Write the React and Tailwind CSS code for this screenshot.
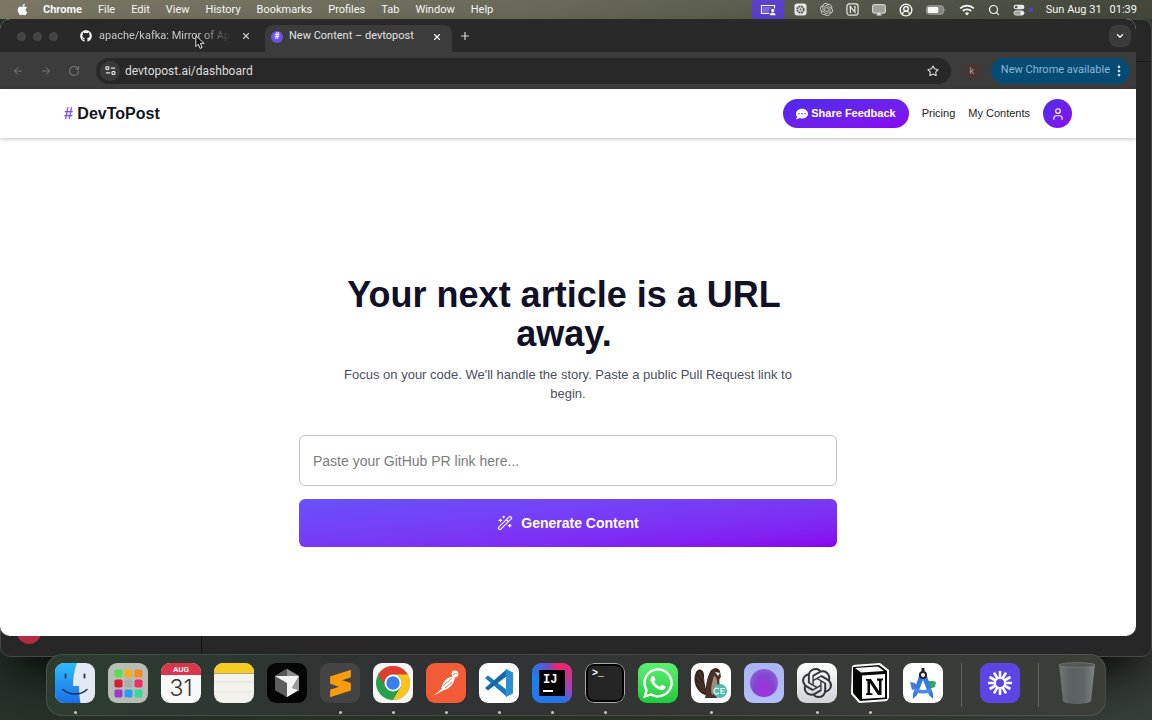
import {
  ArrowLeft,
  ArrowRight,
  ChevronDown,
  CircleUserRound,
  EllipsisVertical,
  Plus,
  RotateCw,
  Search,
  Star,
  User,
  WandSparkles,
  X,
} from "lucide-react";
import { FaApple, FaCommentDots, FaGithub, FaWhatsapp } from "react-icons/fa";
import { SiOpenai, SiSublimetext } from "react-icons/si";

const menus = ["File", "Edit", "View", "History", "Bookmarks", "Profiles", "Tab", "Window", "Help"];

function ScreenShareIcon() {
  return (
    <svg viewBox="0 0 16 12" className="h-3 w-4" fill="none" stroke="white">
      <path d="M9.5 9.5H1.5V1.5h13v3" strokeWidth="1.2" />
      <path d="M3 4h8M3 6h6M3 8h6" strokeWidth=".8" opacity=".6" />
      <circle cx="12.7" cy="6.4" r="1.6" fill="white" stroke="none" />
      <path d="M9.8 11.2c0-3.6 5.8-3.6 5.8 0z" fill="white" stroke="none" />
    </svg>
  );
}

function LoomMenuIcon() {
  return (
    <svg viewBox="0 0 14 14" className="size-[13px]">
      <rect x=".5" y=".5" width="13" height="13" rx="3" fill="#eee" />
      <circle cx="7" cy="7" r="3.4" fill="none" stroke="#55574c" strokeWidth="2" strokeDasharray="2 .7" />
      <circle cx="7" cy="7" r="1" fill="#55574c" />
    </svg>
  );
}

function NotionMenuIcon() {
  return (
    <svg viewBox="0 0 14 14" className="size-[13px]" fill="none" stroke="#f1f1ee">
      <rect x="1" y="1" width="12" height="12" rx="2.5" strokeWidth="1.3" />
      <path d="M3.6 4h2M8.6 4h2M3.8 10.2h1.8" strokeWidth=".9" />
      <path d="M4.7 10V4l4.9 6V4" strokeWidth="1.3" />
    </svg>
  );
}

function DisplayIcon() {
  return (
    <svg viewBox="0 0 14 12" className="h-3 w-3.5">
      <rect x=".7" y=".7" width="12.6" height="8.4" rx="1" fill="#a4a59d" stroke="#eee" />
      <path d="M5.5 9h3v1.6h1.2v.9H4.3v-.9h1.2z" fill="#eee" />
    </svg>
  );
}

function BatteryIcon() {
  return (
    <svg viewBox="0 0 20 10" className="h-2.5 w-5">
      <rect x=".5" y=".8" width="17" height="8.4" rx="2.4" fill="#8a8b82" stroke="#a5a69d" />
      <rect x="1.8" y="2" width="10.5" height="6" rx="1.2" fill="#fff" />
      <path d="M18.6 3.4c1.2.4 1.2 2.8 0 3.2z" fill="#a5a69d" />
    </svg>
  );
}

function WifiIcon() {
  return (
    <svg viewBox="0 0 16 12" className="h-3 w-4" fill="none" stroke="#fff" strokeWidth="1.8">
      <path d="M1.2 4.4a9.6 9.6 0 0 1 13.6 0" />
      <path d="M3.8 7a6 6 0 0 1 8.4 0" />
      <path d="M8 11.4 5.9 9.2a3 3 0 0 1 4.2 0z" fill="#fff" stroke="none" />
    </svg>
  );
}

function ControlCenterIcon() {
  return (
    <svg viewBox="0 0 12 12" className="size-3">
      <rect x=".6" y=".8" width="10.8" height="4.4" rx="2.2" fill="#eee" />
      <circle cx="3.2" cy="3" r="1.3" fill="#4d5045" />
      <rect x="1" y="7" width="10" height="4" rx="2" fill="#a4a59d" stroke="#eee" />
      <circle cx="9" cy="9" r="1.7" fill="#fff" />
    </svg>
  );
}

function MenuBar() {
  return (
    <header className="flex h-[19px] shrink-0 items-center justify-between bg-linear-to-r from-[#7d7866] via-[#6c6d5c] via-45% to-[#44483d] pr-[15px] pl-4 text-[11px] leading-4 text-white">
      <nav className="flex items-center gap-4">
        <button aria-label="Apple menu" className="mr-[-5px] w-4"><FaApple className="size-[13px]" /></button>
        <button className="font-bold">Chrome</button>
        {menus.map((name) => (
          <button key={name}>{name}</button>
        ))}
      </nav>
      <div className="flex items-center gap-[13px]">
        <div className="flex items-center gap-2.5">
          <button aria-label="Screen sharing" className="flex h-[19px] w-8 items-center justify-center bg-[#5b42cf]"><ScreenShareIcon /></button>
          <LoomMenuIcon />
        </div>
        <SiOpenai className="size-[13px] text-[#d7d8d0]" />
        <NotionMenuIcon />
        <DisplayIcon />
        <CircleUserRound className="size-3.5" strokeWidth={2.4} />
        <BatteryIcon />
        <WifiIcon />
        <Search className="size-3" strokeWidth={2.4} />
        <span className="flex items-center gap-1">
          <ControlCenterIcon />
          <span className="size-1 rounded-full bg-[#5e41e0]" />
        </span>
        <time className="flex gap-2"><span>Sun Aug 31</span><span>01:39</span></time>
      </div>
    </header>
  );
}

function TabStrip() {
  return (
    <div className="flex h-[33px] items-end bg-[#292929] pr-[5px]">
      <div className="flex h-8 w-[72px] shrink-0 items-center gap-[7px] pl-[17px]">
        <span className="size-[9px] rounded-full bg-[#444]" />
        <span className="size-[9px] rounded-full bg-[#444]" />
        <span className="size-[9px] rounded-full bg-[#444]" />
      </div>
      <div className="flex h-8 w-[193px] items-center gap-[7px] pr-3 pl-2">
        <FaGithub className="size-3 shrink-0 text-white" />
        <button className="min-w-0 flex-1 text-left text-[11px] whitespace-nowrap text-[#c8c8c8] mask-r-from-75%">apache/kafka: Mirror of Apac</button>
        <button aria-label="Close tab" className="shrink-0 p-0.5 text-[#d0d0d0]"><X className="size-2.5" strokeWidth={2.6} /></button>
      </div>
      <div className="flex h-[27px] w-[187px] items-center gap-1.5 rounded-t-lg bg-[#3c3c3c] pr-2 pb-1 pl-1.5">
        <span className="flex size-3 shrink-0 items-center justify-center rounded-full bg-[#6e50ed] text-[9px] font-bold text-white">#</span>
        <button className="flex-1 text-left text-[11px] whitespace-nowrap text-[#e3e3e3]">New Content – devtopost</button>
        <button aria-label="Close tab" className="p-0.5 text-white"><X className="size-2.5" strokeWidth={2.8} /></button>
      </div>
      <button aria-label="New tab" className="flex h-8 w-[26px] items-center justify-center text-[#d6d6d6]"><Plus className="size-3" strokeWidth={2.4} /></button>
      <button aria-label="Search tabs" className="mb-[5px] ml-auto flex size-[22px] items-center justify-center rounded-lg bg-[#3b3b3b] text-white"><ChevronDown className="size-2.5" strokeWidth={3} /></button>
    </div>
  );
}

function Toolbar() {
  return (
    <div className="flex h-[37px] items-center bg-[#3c3c3c] pr-[6px] pl-3 text-[#777]">
      <button aria-label="Back" className="mr-4"><ArrowLeft className="size-3" /></button>
      <button aria-label="Forward" className="mr-4"><ArrowRight className="size-3" /></button>
      <button aria-label="Reload" className="mr-4"><RotateCw className="size-3" strokeWidth={2.4} /></button>
      <div className="flex h-[26px] flex-1 items-center rounded-full bg-[#282828] pr-3 pl-1">
        <button aria-label="Site information" className="flex size-5 items-center justify-center rounded-full bg-[#3a3a3a]">
          <svg viewBox="0 0 12 12" className="size-[11px]" fill="none" stroke="#e0e0e0" strokeWidth="1.4">
            <circle cx="2.6" cy="3.4" r="1.7" />
            <path d="M6.4 3.4H11M1 8.6h4.6" />
            <circle cx="9.2" cy="8.6" r="1.7" />
          </svg>
        </button>
        <input aria-label="Address" defaultValue="devtopost.ai/dashboard" className="ml-[5px] min-w-0 flex-1 bg-transparent text-xs text-[#dedede] outline-none" />
        <button aria-label="Bookmark" className="text-[#e0e0e0]"><Star className="size-3" strokeWidth={2.2} /></button>
      </div>
      <button className="mr-3 ml-[14px] size-3.5 rounded-sm bg-[#4a3535] text-[9px] leading-3.5 text-[#aaa]">k</button>
      <button className="flex h-[26px] items-center gap-0.5 rounded-full bg-[#064b74] pr-1 pl-2.5 text-[11px] text-[#8fb6d6]">
        New Chrome available
        <EllipsisVertical className="size-3.5 text-[#c8e0f0]" strokeWidth={2.6} />
      </button>
    </div>
  );
}

function SiteHeader() {
  return (
    <header className="flex h-[49px] items-center justify-between px-16 text-[11px] text-[#222] shadow-[0_1px_4px_rgba(0,0,0,0.25)]">
      <a href="#" className="text-base font-bold text-[#15151c]"><span className="text-[#7552f2]">#</span> DevToPost</a>
      <nav className="flex items-center gap-[13px]">
        <button className="flex h-[29px] items-center gap-[3px] rounded-full bg-linear-to-br from-[#4a2be8] to-[#8a00f0] px-[13px] font-bold text-white">
          <FaCommentDots className="size-3" />
          Share Feedback
        </button>
        <a href="#pricing">Pricing</a>
        <a href="#contents">My Contents</a>
        <button aria-label="Account" className="flex size-[29px] items-center justify-center rounded-full bg-linear-to-br from-[#4a2be8] to-[#8a00f0] text-white"><User className="size-3.5" strokeWidth={2} /></button>
      </nav>
    </header>
  );
}

function Dashboard() {
  return (
    <main className="mx-auto flex w-full max-w-[538px] flex-col pt-[137px]">
      <h1 className="pr-2 text-center text-4xl leading-[39px] font-bold text-[#101127]">
        Your next article is a URL
        <br />
        away.
      </h1>
      <p className="mx-auto mt-3 max-w-[461px] text-center text-[13px] leading-[19px] text-[#4b4f5c]">
        Focus on your code. We'll handle the story. Paste a public Pull Request link to begin.
      </p>
      <form className="mt-8 flex flex-col gap-[13px]" onSubmit={(e) => e.preventDefault()}>
        <input aria-label="GitHub PR link" placeholder="Paste your GitHub PR link here..." className="h-[51px] rounded-md border border-[#c4c4c4] px-[13px] text-sm placeholder:text-[#7c7c7c]" />
        <button className="flex h-12 items-center justify-center gap-2 rounded-md bg-linear-to-br from-[#6652fb] to-[#8700ef] text-sm font-bold text-white">
          <WandSparkles className="size-4" strokeWidth={1.8} />
          Generate Content
        </button>
      </form>
    </main>
  );
}

function Finder() {
  return (
    <svg viewBox="0 0 40 40">
      <defs>
        <linearGradient id="finder" x2="0" y2="1"><stop stopColor="#2dbcf8" /><stop offset="1" stopColor="#1b6eea" /></linearGradient>
      </defs>
      <rect width="40" height="40" fill="#e5e9f3" />
      <path d="M0 0h22c-3 7-4 15-4 23h6c0 7 .5 12 1.5 17H0z" fill="url(#finder)" />
      <path d="M10.5 11.5v3M29.5 11.5v3" stroke="#183450" strokeWidth="1.8" strokeLinecap="round" />
      <path d="M8 26.5c6 6 18 6 24 0" fill="none" stroke="#183450" strokeWidth="1.5" strokeLinecap="round" />
    </svg>
  );
}

const launchpadColors = ["#5bdd50", "#f5ab25", "#f58b1e", "#d61f33", "#a9adad", "#ee2c69", "#9a3cc9", "#2a9df0", "#36d99b"];

function Launchpad() {
  return (
    <svg viewBox="0 0 40 40">
      <rect width="40" height="40" fill="#b8bdb5" />
      {launchpadColors.map((color, i) => (
        <rect key={color} x={6.5 + (i % 3) * 10} y={6.5 + Math.floor(i / 3) * 10} width="8" height="8" rx="1.8" fill={color} />
      ))}
    </svg>
  );
}

function Calendar() {
  return (
    <span className="flex size-full flex-col items-center bg-[#f8f8f8]">
      <span className="h-3 w-full bg-[#d8364c] text-center text-[8px] leading-[13px] font-semibold text-white">AUG</span>
      <span className="font-[Inter,sans-serif] text-[23px] leading-[26px] font-light text-[#333]">31</span>
    </span>
  );
}

function Notes() {
  return (
    <svg viewBox="0 0 40 40">
      <rect width="40" height="40" fill="#f3f2ed" />
      <path d="M0 0h40v10H0z" fill="#f5cc25" />
      <path d="M0 10.5h40" stroke="#b6a86c" />
      <path d="M0 19h40M0 29h40" stroke="#e4e3dd" />
    </svg>
  );
}

function Cursor() {
  return (
    <svg viewBox="0 0 40 40">
      <rect width="40" height="40" fill="#050505" />
      <path d="M20 6 32 13v14l-12 7-12-7V13z" fill="#777" />
      <path d="M20 6 32 13H8z" fill="#8d8d8d" />
      <path d="M20 6v7H8z" fill="#555" />
      <path d="M8 13l12 7v14L8 27z" fill="#5d5d5d" />
      <path d="M8 13h24l-7 12 7 2-12 7V20z" fill="#f3f3f3" />
      <path d="M32 13v14l-7-2z" fill="#999" />
    </svg>
  );
}

function Sublime() {
  return (
    <span className="flex size-full items-center justify-center bg-[#444] text-[#f89b0c]"><SiSublimetext className="size-[27px]" /></span>
  );
}

function Chrome() {
  return (
    <svg viewBox="0 0 40 40">
      <rect width="40" height="40" fill="#f5f5f5" />
      <circle cx="20" cy="20" r="17" fill="#25a14b" />
      <path d="M5.3 11.5A17 17 0 0 1 34.7 11.5H20a8.5 8.5 0 0 0-7.4 12.7z" fill="#e33b2e" />
      <path d="M34.7 11.5A17 17 0 0 1 20 37l7.4-12.8A8.5 8.5 0 0 0 20 11.5z" fill="#fcc41c" />
      <circle cx="20" cy="20" r="8.5" fill="#fff" />
      <circle cx="20" cy="20" r="6.7" fill="#3b7ded" />
    </svg>
  );
}

function Postman() {
  return (
    <svg viewBox="0 0 40 40">
      <rect width="40" height="40" fill="#f15b35" />
      <circle cx="29" cy="11" r="3.4" fill="#fff" />
      <path d="M27 13.5c-4 0-8 3-10 7l-2 5-7 7 9-5 5-2c4-3 6-6 7-11z" fill="#fff" />
      <path d="M17 23l9-8M19 25l7-6M16 25l-5 5" stroke="#f15b35" strokeWidth=".8" />
      <path d="M27 11.5l4.5-1.5" stroke="#f15b35" strokeWidth=".8" />
    </svg>
  );
}

function VsCode() {
  return (
    <svg viewBox="0 0 40 40">
      <rect width="40" height="40" fill="#fff" />
      <path d="M6 15l3-2.5L28 27v7z" fill="#1b79bd" />
      <path d="M6 25l3 2.5L28 13V6z" fill="#1668a8" />
      <path d="M27 6l7 3.5v21L27 34z" fill="#2b8fd2" />
    </svg>
  );
}

function IntelliJ() {
  return (
    <span className="flex size-full items-center justify-center bg-[conic-gradient(from_20deg,#f5226b,#9d44b8_25%,#2b71e8_35%,#1583ef_75%,#6950c8_90%,#f5226b)]">
      <span className="flex size-[26px] flex-col justify-between bg-black p-1 text-left font-['Liberation_Mono',monospace] text-xs leading-3 font-bold text-white">
        IJ
        <span className="h-0.5 w-2.5 bg-white" />
      </span>
    </span>
  );
}

function Terminal() {
  return (
    <span className="block size-full rounded-[9px] border border-[#aaa] bg-black p-0.5">
      <span className="block size-full rounded-md bg-[#252525] pl-1 text-left font-['Liberation_Mono',monospace] text-[10px] leading-[15px] font-bold text-white">&gt;_</span>
    </span>
  );
}

function WhatsApp() {
  return (
    <span className="flex size-full items-center justify-center bg-linear-to-b from-[#5cf073] to-[#1ccb3a] text-white"><FaWhatsapp className="size-[34px]" /></span>
  );
}

function DBeaver() {
  return (
    <svg viewBox="0 0 40 40">
      <rect width="40" height="40" fill="#fff" />
      <path d="M14 32C5 29 1 17 5 9c3-5 8-2 8 3 0 7 1 13 5 20z" fill="#39251f" />
      <path d="M6 14l8 12M6 20l8 9M8 9l5 9" stroke="#6a4c3e" strokeWidth=".8" />
      <path d="M18 11c2-7 9-8 11-3l1 6c-3 2-1 7-1 12l-3 9H14c2-6-1-11 4-24z" fill="#493029" />
      <path d="M23 13c3 0 4 7 3 15l-5 4c-2-6 0-13 2-19z" fill="#a38b7b" />
      <path d="M24 9l5 1-2 3z" fill="#eee" />
      <circle cx="26" cy="7.5" r="1" fill="#111" />
      <circle cx="29" cy="28" r="7" fill="#52b9a9" />
      <path d="M28 26c-3-2-5 0-5 2s2 4 5 2M34 25.5h-4v5h4M30 28h3.5" fill="none" stroke="#e9fffb" strokeWidth="1.2" />
    </svg>
  );
}

function Orb() {
  return (
    <span className="flex size-full items-center justify-center bg-linear-to-b from-[#a9b4f2] to-[#b4c0fa]">
      <span className="size-7 rounded-full bg-radial-[at_50%_75%] from-[#a52fdc] via-[#8545d2] to-[#9478d8]" />
    </span>
  );
}

function ChatGpt() {
  return (
    <span className="flex size-full items-center justify-center bg-linear-to-b from-white to-[#cfd3d6] text-[#30363a]"><SiOpenai className="size-[30px]" /></span>
  );
}

function Notion() {
  return (
    <svg viewBox="0 0 40 40">
      <path d="M2 2 30 0l9 7v31L9 40 1 31z" fill="#fff" />
      <path d="M3 4 29 2l8 6v28L10 38l-7-8z" fill="#050505" />
      <path d="M5 5l23-1.5L34 8 11 9.5z" fill="#fff" />
      <path d="M12 12.5 35 11v23.5L12 36z" fill="#fff" />
      <path d="M16 16h5l8 12v-10l-2-.5V15.5h6V17l-1.5.8V32H28l-8-12v10l2.5.6V32H16v-1.4l1.5-.6V18L16 17.5z" fill="#050505" />
    </svg>
  );
}

function AndroidStudio() {
  return (
    <svg viewBox="0 0 40 40">
      <rect width="40" height="40" fill="#fff" />
      <path d="M24 18h6l3 1-1 5-6 2z" fill="#35a853" />
      <path d="M7 19l5 1 4 5-7 2z" fill="#477bd4" />
      <path d="M17 10l-7 21v5l4-4 6-15 6 15 4 4v-5l-7-21z" fill="#2f7be6" />
      <path d="M12 25q8 4 16 0v4q-8 3-16 0z" fill="#4a8bea" />
      <path d="M20 5v5" stroke="#222" strokeWidth="3" />
      <circle cx="20" cy="12" r="3" fill="#fff" stroke="#222" strokeWidth="2" />
    </svg>
  );
}

function Loom() {
  return (
    <svg viewBox="0 0 40 40">
      <rect width="40" height="40" fill="#5d45e5" />
      {[0, 30, 60, 90, 120, 150, 180, 210, 240, 270, 300, 330].map((angle) => (
        <path key={angle} d="M20 15V8" stroke="#fff" strokeWidth="2.6" transform={`rotate(${angle} 20 20)`} />
      ))}
      <circle cx="20" cy="20" r="5" fill="none" stroke="#fff" strokeWidth="2" />
    </svg>
  );
}

function Trash() {
  return (
    <svg viewBox="0 0 40 44" className="h-11 w-10">
      <defs>
        <linearGradient id="trash"><stop stopColor="#7c8280" /><stop offset=".3" stopColor="#62686a" /><stop offset=".7" stopColor="#666c6e" /><stop offset="1" stopColor="#8c9192" /></linearGradient>
      </defs>
      <path d="M2 3h36l-4 37c-2 4-26 4-28 0z" fill="url(#trash)" opacity=".85" />
      <ellipse cx="20" cy="4" rx="18" ry="2.4" fill="#565a57" stroke="#7c807d" strokeWidth=".6" />
    </svg>
  );
}

const apps = [
  { name: "Finder", icon: Finder, open: true },
  { name: "Launchpad", icon: Launchpad },
  { name: "Calendar", icon: Calendar },
  { name: "Notes", icon: Notes },
  { name: "Cursor", icon: Cursor },
  { name: "Sublime Text", icon: Sublime, open: true },
  { name: "Google Chrome", icon: Chrome, open: true },
  { name: "Postman", icon: Postman, open: true },
  { name: "Visual Studio Code", icon: VsCode, open: true },
  { name: "IntelliJ IDEA", icon: IntelliJ, open: true },
  { name: "Terminal", icon: Terminal, open: true },
  { name: "WhatsApp", icon: WhatsApp },
  { name: "DBeaver", icon: DBeaver, open: true },
  { name: "Orb", icon: Orb },
  { name: "ChatGPT", icon: ChatGpt, open: true },
  { name: "Notion", icon: Notion, open: true },
  { name: "Android Studio", icon: AndroidStudio },
];

function DockApp({ name, icon: Icon, open }) {
  return (
    <button aria-label={name} className="flex flex-col items-center gap-2">
      <span className="block size-10 overflow-hidden rounded-[9px]"><Icon /></span>
      <span className={open ? "size-[3px] rounded-full bg-[#c5c8c1]" : "size-[3px]"} />
    </button>
  );
}

function Dock() {
  return (
    <nav className="absolute bottom-1 left-1/2 flex h-[62px] -translate-x-1/2 gap-[18px] rounded-2xl border border-white/10 bg-linear-to-r from-[#2c3d30] via-[#303133] via-35% to-[#3b3f38] px-2 pt-2">
      <div className="flex gap-[13px]">
        {apps.map((app) => (
          <DockApp key={app.name} {...app} />
        ))}
      </div>
      <span className="h-11 w-px bg-white/20" />
      <DockApp name="Loom" icon={Loom} />
      <span className="h-11 w-px bg-white/20" />
      <button aria-label="Trash" className="-mt-0.5 self-start"><Trash /></button>
    </nav>
  );
}

export default function App() {
  return (
    <div className="relative flex h-screen flex-col overflow-hidden bg-linear-to-r from-[#263329] via-[#2b3327] to-[#363e38] font-[Roboto,sans-serif]">
      <MenuBar />
      <div className="relative flex-1">
        <div className="absolute inset-x-0 top-0 bottom-[63px] overflow-hidden rounded-[10px] border border-[#484848] bg-[#272727] shadow-2xl shadow-black">
          <div className="mt-[41px] h-px bg-[#1b1b1b]" />
          <span className="absolute bottom-3 left-4 size-6 rounded-full bg-[#b52b42]" />
          <span className="absolute bottom-0 left-[200px] h-5 w-px bg-[#151515]" />
        </div>
        <div className="absolute top-0 right-4 bottom-[84px] left-0 flex flex-col overflow-hidden rounded-[10px] bg-white">
          <TabStrip />
          <Toolbar />
          <div className="flex-1 font-['Liberation_Sans',Arial,sans-serif]">
            <SiteHeader />
            <Dashboard />
          </div>
          <svg viewBox="0 0 12 18" className="absolute top-4 left-[195px] h-[15px] w-2.5">
            <path d="M1 1v13l3-3 2 5 2.5-1-2-5H11z" fill="#111" stroke="#ddd" strokeWidth="1.2" />
          </svg>
        </div>
      </div>
      <Dock />
    </div>
  );
}
